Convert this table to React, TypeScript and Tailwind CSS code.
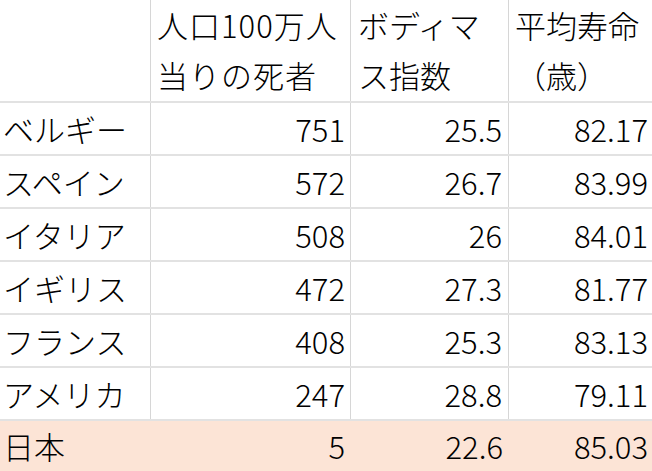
import React from 'react';

const rows = [
  { name: 'ベルギー', deaths: '751', bmi: '25.5', life: '82.17' },
  { name: 'スペイン', deaths: '572', bmi: '26.7', life: '83.99' },
  { name: 'イタリア', deaths: '508', bmi: '26', life: '84.01' },
  { name: 'イギリス', deaths: '472', bmi: '27.3', life: '81.77' },
  { name: 'フランス', deaths: '408', bmi: '25.3', life: '83.13' },
  { name: 'アメリカ', deaths: '247', bmi: '28.8', life: '79.11' },
];

export default function App() {
  return (
    <div
      className="w-[652px] h-[471px] overflow-hidden bg-white text-black text-[31px] font-light leading-[50px]"
      style={{ fontFamily: '"Noto Sans CJK JP", "Noto Sans", sans-serif' }}
    >
      {/* header */}
      <div className="flex h-[103px] border-b-2 border-[#e2e2e2]">
        <div className="w-[151px] border-r border-[#d6d6d6]" />
        <div className="w-[200px] border-r border-[#d6d6d6] pl-[6px] whitespace-nowrap tracking-[1px]">
          <div>人口100万人</div>
          <div>当りの死者</div>
        </div>
        <div className="w-[158px] border-r border-[#d6d6d6] pl-[7px]">
          <div>ボディマ</div>
          <div>ス指数</div>
        </div>
        <div className="flex-1 pl-[6px] whitespace-nowrap">
          <div>平均寿命</div>
          <div>（歳）</div>
        </div>
      </div>

      {rows.map((r) => (
        <div key={r.name} className="flex h-[53px] items-center border-b-2 border-[#e2e2e2]">
          <div className="w-[151px] h-full flex items-center border-r border-[#d6d6d6] pl-[3px]">{r.name}</div>
          <div className="w-[200px] h-full flex items-center justify-end border-r border-[#d6d6d6] pr-[5px]">{r.deaths}</div>
          <div className="w-[158px] h-full flex items-center justify-end border-r border-[#d6d6d6] pr-[6px]">{r.bmi}</div>
          <div className="flex-1 h-full flex items-center justify-end pr-[4px]">{r.life}</div>
        </div>
      ))}

      {/* Japan highlighted */}
      <div className="flex h-[50px] items-center bg-[#fce4d6]">
        <div className="w-[151px] pl-[3px]">日本</div>
        <div className="w-[200px] text-right pr-[6px]">5</div>
        <div className="w-[158px] text-right pr-[6px]">22.6</div>
        <div className="flex-1 text-right pr-[4px]">85.03</div>
      </div>
    </div>
  );
}
